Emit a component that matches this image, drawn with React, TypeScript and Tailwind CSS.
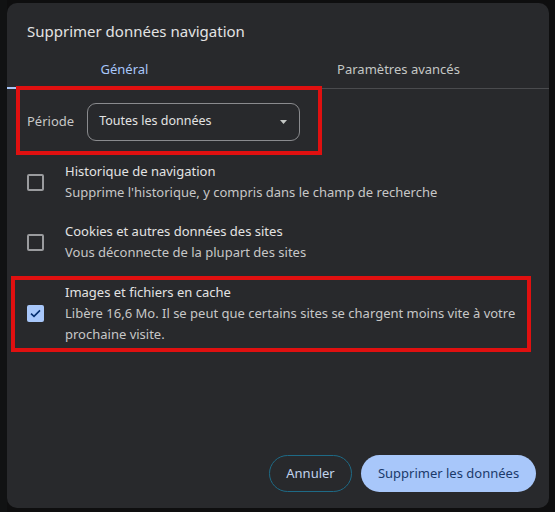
import React from "react";

const items = [
  {
    title: "Historique de navigation",
    desc: "Supprime l'historique, y compris dans le champ de recherche",
  },
  {
    title: "Cookies et autres données des sites",
    desc: "Vous déconnecte de la plupart des sites",
  },
];

function Checkbox({ checked }: { checked: boolean }) {
  if (checked) {
    return (
      <div className="w-[17px] h-[17px] shrink-0 rounded-[2px] bg-[#a8c7fa] flex items-center justify-center">
        <svg width="11" height="9" viewBox="0 0 11 9" fill="none">
          <path d="M1 4.6 L4 7.4 L10 1.4" stroke="#062e6f" strokeWidth="1.6" />
        </svg>
      </div>
    );
  }
  return <div className="w-[17px] h-[17px] shrink-0 rounded-[2px] border-2 border-[#9a9b9e]" />;
}

export default function App() {
  return (
    <div
      className="w-[555px] h-[512px] bg-[#0e0e0f] flex overflow-hidden"
      style={{ fontFamily: '"Noto Sans", "Open Sans", sans-serif' }}
    >
      {/* page behind the dialog */}
      <div className="w-[7px] shrink-0 bg-[#111213]" />

      <div className="mt-[3px] mb-[4px] w-[542px] rounded-[10px] bg-[#28292c] flex flex-col">
        <h1 className="text-[#e3e3e3] text-[15px] leading-[20px] pl-[20px] pt-[18px]">
          Supprimer données navigation
        </h1>

        {/* tabs */}
        <div className="flex border-b border-[#4a4b4e]">
          <div className="w-[235px] flex flex-col items-center">
            <span className="text-[#a8c7fa] text-[13px] leading-[18px] pt-[19px] pb-[9px]">Général</span>
            <div className="w-full h-[2px] bg-[#a8c7fa] -mb-px" />
          </div>
          <div className="flex-1 flex justify-center">
            <span className="text-[#c4c7c5] text-[13px] leading-[18px] pt-[19px] pl-[6px]">Paramètres avancés</span>
          </div>
        </div>

        {/* period */}
        <div className="ml-[9px] mt-[-3px] w-[306px] h-[69px] border-[4px] border-[#e01010] flex items-center pl-[7px] pt-[2px]">
          <span className="text-[#c7c7c7] text-[13px] mr-[13px]">Période</span>
          <div className="w-[213px] h-[38px] rounded-[9px] border border-[#8a8b8e] flex items-center justify-between pl-[11px] pr-[12px]">
            <span className="text-[#e3e3e3] text-[12.5px]">Toutes les données</span>
            <svg width="7" height="4" viewBox="0 0 7 4">
              <path d="M0 0 L7 0 L3.5 4 Z" fill="#c4c7c5" />
            </svg>
          </div>
        </div>

        {/* checkbox list */}
        <div className="flex flex-col mt-[-3px]">
          {items.map((it) => (
            <div key={it.title} className="flex items-center h-[60px] pl-[20px]">
              <Checkbox checked={false} />
              <div className="ml-[21px] flex flex-col gap-[4px]">
                <span className="text-[#e3e3e3] text-[13px] leading-[17px]">{it.title}</span>
                <span className="text-[#c7c7c7] text-[13px] leading-[17px]">{it.desc}</span>
              </div>
            </div>
          ))}
          <div className="ml-[4px] mt-[4px] w-[520px] h-[76px] border-[4px] border-[#e01010] flex items-center pl-[12px] pb-[2px]">
            <Checkbox checked />
            <div className="ml-[21px] flex flex-col">
              <span className="text-[#e3e3e3] text-[13px] leading-[21px]">Images et fichiers en cache</span>
              <span className="text-[#c7c7c7] text-[13px] leading-[21px]">
                Libère 16,6 Mo. Il se peut que certains sites se chargent moins vite à votre prochaine visite.
              </span>
            </div>
          </div>
        </div>

        {/* actions */}
        <div className="mt-auto mb-[16px] flex justify-end gap-[9px] pr-[13px]">
          <button className="h-[37px] w-[83px] rounded-full border border-[#1e6a86] text-[#c2d4ee] text-[13px]">
            Annuler
          </button>
          <button className="h-[37px] w-[175px] rounded-full bg-[#a8c7fa] text-[#1b3a6b] text-[13px]">
            Supprimer les données
          </button>
        </div>
      </div>
    </div>
  );
}
